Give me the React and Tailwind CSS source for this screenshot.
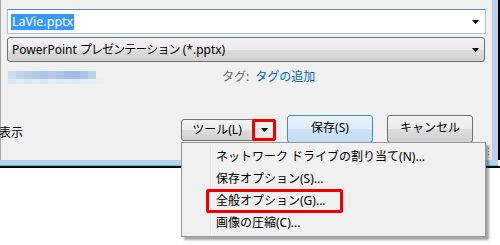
import React from "react";

const font = { fontFamily: '"Noto Sans", "Noto Sans CJK JP", sans-serif' };

function Tri({ className = "" }) {
  return (
    <svg width="7" height="4" viewBox="0 0 7 4" className={className}>
      <path d="M0 0H7L3.5 4Z" fill="#000" />
    </svg>
  );
}

const blurTop = ["#cddcee", "#bfd3ea", "#b8cee8", "#b0c9e6", "#a9c4e4", "#b3cbe6", "#aac5e5", "#9fbde1", "#9dbce2", "#a7c5e7", "#bcd3ec"];
const blurBot = ["#d9e4f2", "#e2eaf5", "#dbe5f2", "#e4ebf5", "#dde6f3", "#e6edf6", "#dee7f3", "#e3eaf5", "#dfe8f4", "#e7eef7", "#e4ecf6", "#e9eff7"];

export default function App() {
  return (
    <div className="relative w-[500px] h-[245px] overflow-hidden bg-white text-[12px] text-black" style={font}>
      {/* dialog */}
      <div className="flex flex-col h-[168px]">
        <div className="flex flex-1">
          <div className="w-[491px] h-[160px] bg-[#f0f0f0] border-l border-[#a7a7a7] flex flex-col">
            {/* file name input */}
            <div className="mt-[9px] ml-[6px] w-[479px] h-[25px] bg-white border border-[#a6c3e4] border-t-[#5c8dc2] flex items-center pl-[3px] pr-[6px]">
              <span className="bg-[#3399ff] text-white text-[12.5px] leading-[16px] px-[1px]">LaVie.pptx</span>
              <div className="flex-1" />
              <Tri />
            </div>
            {/* type select */}
            <div className="mt-[3px] ml-[6px] w-[478px] h-[25px] rounded-[3px] border border-[#707070] bg-[linear-gradient(#f2f2f2,#ebebeb_50%,#dddddd_50%,#cfcfcf)] flex items-center pl-[4px] pr-[5px]">
              <span className="text-[12px] leading-[16px]">
                PowerPoint <span className="tracking-[-0.9px]">プレゼンテーション</span> (*.pptx)
              </span>
              <div className="flex-1" />
              <Tri />
            </div>
            {/* tag row */}
            <div className="mt-[9px] flex items-start h-[14px]">
              <div className="ml-[7px] flex flex-col">
                <div className="flex h-[8px]">
                  {blurTop.map((c, i) => (
                    <div key={i} className="w-[8px] h-[8px]" style={{ background: c }} />
                  ))}
                </div>
                <div className="flex h-[5px]">
                  {blurBot.map((c, i) => (
                    <div key={i} className="w-[8px] h-[5px]" style={{ background: c }} />
                  ))}
                </div>
              </div>
              <div className="ml-[118px] -mt-[2px] flex items-center leading-[16px] text-[12px]">
                <span className="text-[#6d6d6d]">タグ:</span>
                <span className="ml-[6px] text-[#0066cc]">タグの追加</span>
              </div>
            </div>
            {/* buttons row */}
            <div className="mt-[30px] flex items-start -ml-[2px]">
              <div className="mt-[10px] text-[12px] leading-[16px]">表示</div>
              <div className="ml-[158px] mt-[4px] w-[95px] h-[22px] rounded-[3px] border border-[#707070] bg-[linear-gradient(#f2f2f2,#ebebeb_50%,#dddddd_50%,#cfcfcf)] flex items-stretch">
                <div className="w-[70px] flex items-center justify-center leading-[16px]">ツール(L)</div>
                <div className="flex-1 -my-[1px] -mr-[1px] border-[3px] border-[#f00000] rounded-[2px] flex items-center justify-center bg-[linear-gradient(#f2f2f2,#e6e6e6)]">
                  <Tri />
                </div>
              </div>
              <div className="ml-[11px] w-[86px] h-[28px] rounded-[3px] border border-[#3c8fd4] bg-[linear-gradient(#e8f3fc,#dcecf9_50%,#cfe4f6_50%,#c3ddf3)] flex items-center justify-center leading-[16px] pb-[2px]">
                保存(S)
              </div>
              <div className="ml-[14px] w-[86px] h-[28px] rounded-[3px] border border-[#707070] bg-[linear-gradient(#f2f2f2,#ebebeb_50%,#dddddd_50%,#cfcfcf)] flex items-center justify-center leading-[16px] pb-[2px]">
                キャンセル
              </div>
            </div>
          </div>
          <div className="w-[1px] bg-[#dde8f4]" />
          <div className="w-[6px] bg-[#b9d1ea]" />
          <div className="w-[2px] bg-black" />
        </div>
        <div className="h-[5px] bg-[#b9d1ea] mr-[2px]" />
        <div className="h-[1px] bg-[#3cc6e8] mr-[2px]" />
        <div className="h-[2px] bg-black" />
      </div>

      {/* resize grip */}
      <div className="absolute left-[487px] top-[147px] w-[3px] h-[10px] bg-[radial-gradient(#9a9a9a_1px,transparent_1px)] bg-[length:3px_3px]" />

      {/* menu */}
      <div className="absolute left-[181px] top-[142px] w-[305px] h-[95px] bg-[#f0f0f0] border border-[#979797] shadow-[3px_3px_2px_rgba(0,0,0,0.35)] pt-[3px]">
        <div className="absolute left-[28px] top-[2px] bottom-[2px] w-[1px] bg-[#e2e3e3]" />
        <div className="absolute left-[29px] top-[2px] bottom-[2px] w-[1px] bg-white" />
        <div className="relative h-[22px] flex items-center pl-[34px] leading-[16px]">ネットワーク ドライブの割り当て(N)...</div>
        <div className="relative h-[22px] flex items-center pl-[34px] leading-[16px]">保存オプション(S)...</div>
        <div className="relative h-[22px] flex items-center pl-[24px]">
          <div className="w-[137px] h-[24px] border-[3px] border-[#f00000] rounded-[2px] flex items-center pl-[7px] leading-[16px]">
            全般オプション(G)...
          </div>
        </div>
        <div className="relative h-[22px] flex items-center pl-[34px] leading-[16px]">画像の圧縮(C)...</div>
      </div>
    </div>
  );
}
